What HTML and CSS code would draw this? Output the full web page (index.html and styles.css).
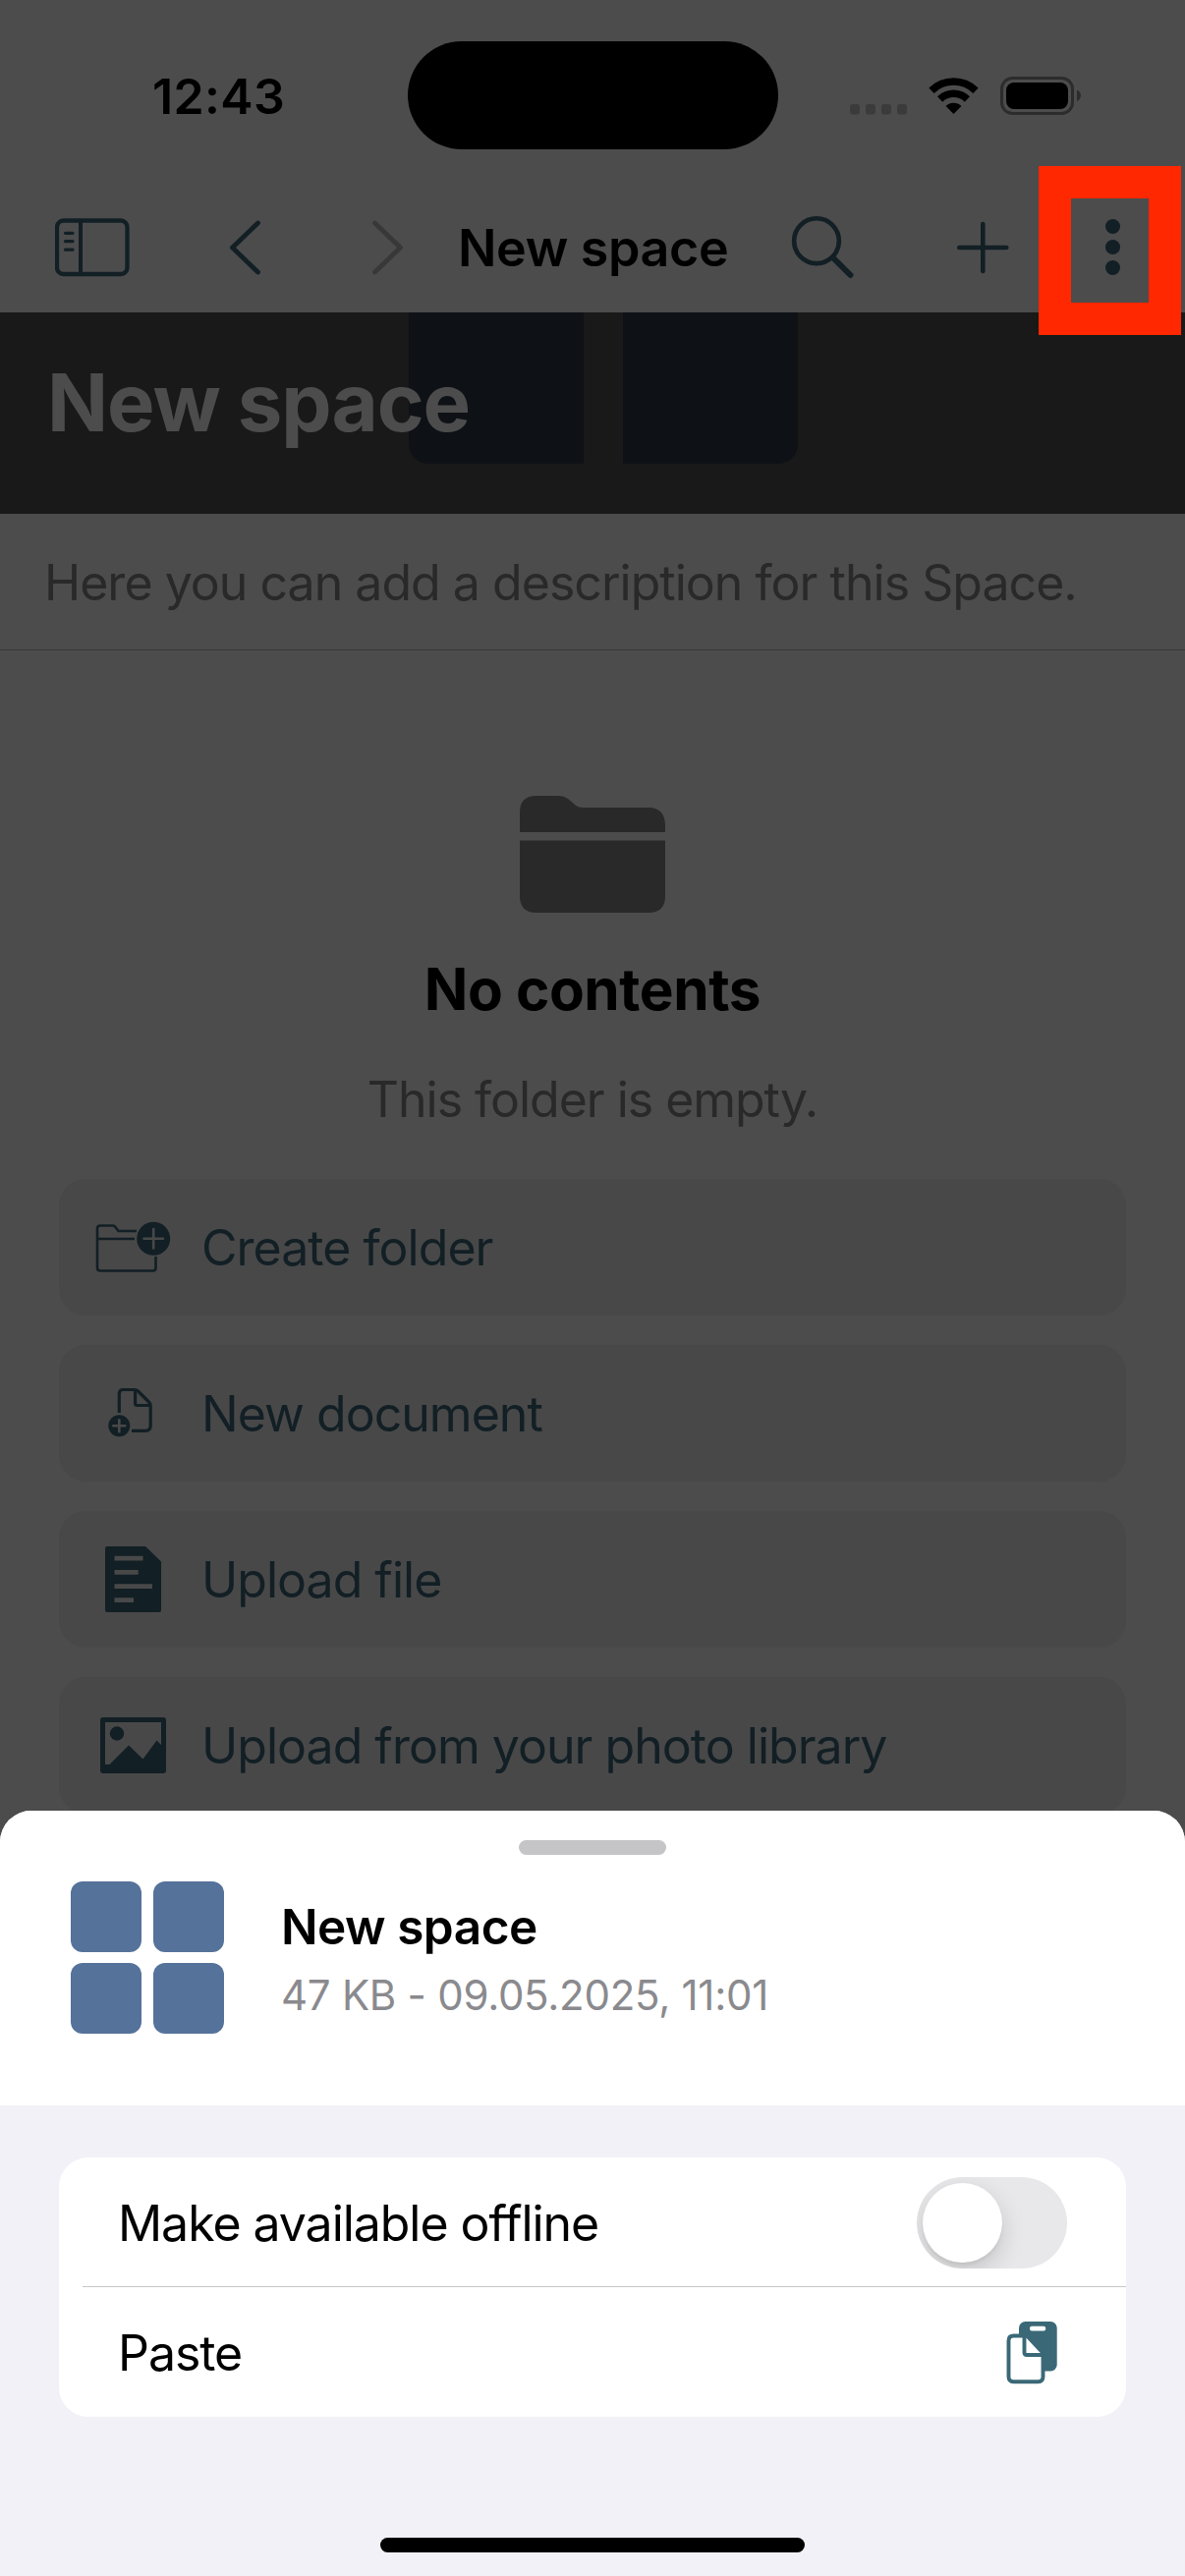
FILE: index.html
```html
<!DOCTYPE html>
<html lang="en">
<head>
<meta charset="utf-8">
<title>New space</title>
<link rel="stylesheet" href="styles.css">
</head>
<body>
<div class="screen">
  <header class="status">
    <span class="time">12:43</span>
    <span class="island"></span>
    <svg class="indicators" viewBox="862 76 240 42" width="240" height="42">
      <g fill="#3b3b3b">
        <rect x="865" y="106" width="10" height="10.5" rx="3"/>
        <rect x="881" y="106" width="10" height="10.5" rx="3"/>
        <rect x="897" y="106" width="10" height="10.5" rx="3"/>
        <rect x="913" y="106" width="10" height="10.5" rx="3"/>
      </g>
      <path d="M948 92.2A32 32 0 0 1 993 92.2M956.6 100.9A20 20 0 0 1 984.4 100.9" fill="none" stroke="#000" stroke-width="7.6"/>
      <path d="M970.5 116L962.6 107.9A11.5 11.5 0 0 1 978.4 107.9Z"/>
      <rect x="1019.5" y="79.500" width="72" height="36" rx="11" fill="none" stroke="#2c2c2c" stroke-width="3"/>
      <rect x="1024" y="84" width="63" height="27" rx="8"/>
      <path d="M1096 91.500Q1100 93.500 1100 97.200T1096 103Z" fill="#2c2c2c"/>
    </svg>
  </header>

  <nav class="nav">
    <svg class="nav-sidebar" viewBox="56 222 76 60" width="76" height="60" fill="none" stroke="#121f25" stroke-linecap="round">
      <rect x="58" y="224.500" width="71.500" height="54.500" rx="6.500" stroke-width="4.300"/>
      <path d="M82 225V279" stroke-width="4"/>
      <path d="M66.500 237.300H74M66.500 245.700H74M66.500 254.200H74" stroke-width="3.200"/>
    </svg>
    <svg class="nav-back" viewBox="233 224 34 56" width="34" height="56" fill="none" stroke="#121f25" stroke-width="4.800" stroke-linecap="round" stroke-linejoin="round"><path d="M262.500 227L236.500 252L262.500 277"/></svg>
    <svg class="nav-forward" viewBox="378 224 34 56" width="34" height="56" fill="none" stroke="#383838" stroke-width="4.800" stroke-linecap="round" stroke-linejoin="round"><path d="M381.500 227L407.500 252L381.500 277"/></svg>
    <span class="nav-title">New space</span>
    <svg class="nav-search" viewBox="805 219 64 66" width="64" height="66" fill="none" stroke="#121f25" stroke-linecap="round"><circle cx="831" cy="245.200" r="22.900" stroke-width="4.600"/><path d="M848.500 263L865.500 280" stroke-width="6"/></svg>
    <svg class="nav-plus" viewBox="973 225 55 54" width="55" height="54" stroke="#121f25" stroke-width="4.600" stroke-linecap="round"><path d="M1000.300 228V276M976.300 252H1024.300"/></svg>
    <svg class="nav-more" viewBox="1124 222 17 60" width="17" height="60" fill="#121f25"><circle cx="1132.500" cy="230.500" r="7.500"/><circle cx="1132.500" cy="251.500" r="7.500"/><circle cx="1132.500" cy="272.500" r="7.500"/></svg>
    <span class="highlight"></span>
  </nav>

  <section class="banner">
    <div class="cover"><i></i><i></i></div>
    <h1>New space</h1>
  </section>
  <p class="description">Here you can add a description for this Space.</p>

  <main class="empty">
    <svg class="folder" viewBox="529 810 149 119" width="149" height="119" fill="#292929">
      <path d="M529 847V827Q529 810 546 810H568C581 810 583 822 593 822H660Q677 822 677 841V847Z"/>
      <path d="M529 855.500H677V912Q677 929 660 929H546Q529 929 529 912Z"/>
    </svg>
    <h2>No contents</h2>
    <p>This folder is empty.</p>
  </main>

  <div class="actions">
    <div class="action">
      <svg viewBox="94 1230 80 80" width="80" height="80" fill="none" stroke="#121f25" stroke-width="2.600" stroke-linecap="butt">
        <path d="M139 1253H120.500L117.500 1249Q116.500 1247.500 115 1247.500H102Q99 1247.500 99 1250.500V1290.500Q99 1293.500 102 1293.500H155.500Q158.500 1293.500 158.500 1290.500V1279M99 1261H137"/>
        <circle cx="156.200" cy="1260.700" r="17" fill="#121f25" stroke="none"/>
        <path d="M146.500 1260.700H166M156.200 1251V1270.500" stroke="#484848" stroke-linecap="round"/>
      </svg>
      <span>Create folder</span>
    </div>
    <div class="action">
      <svg viewBox="94 1399 80 80" width="80" height="80" fill="none" stroke="#121f25" stroke-width="3.200" stroke-linejoin="round">
        <path d="M121.300 1438V1418.500Q121.300 1414.500 125.300 1414.500H137Q139 1414.500 140.500 1416L151.500 1427Q153.200 1428.700 153.200 1431V1451Q153.200 1456.300 148 1456.300H134"/>
        <path d="M137.600 1415V1428.500Q137.600 1430.500 139.600 1430.500H153"/>
        <circle cx="121.300" cy="1451.200" r="11" fill="#121f25" stroke="none"/>
        <path d="M115.300 1451.200H127.300M121.300 1445.200V1457.200" stroke="#484848" stroke-width="2.600" stroke-linecap="round"/>
      </svg>
      <span>New document</span>
    </div>
    <div class="action">
      <svg viewBox="94 1568 80 80" width="80" height="80">
        <path fill="#121f25" d="M109 1574H148L164 1589.500V1639Q164 1641 162 1641H109Q107 1641 107 1639V1576Q107 1574 109 1574Z"/>
        <path stroke="#484848" stroke-width="4.700" d="M116.500 1586.200H145.500M116.500 1600.300H140.700M116.500 1614.600H155M116.500 1628.700H136"/>
      </svg>
      <span>Upload file</span>
    </div>
    <div class="action">
      <svg viewBox="94 1737 80 80" width="80" height="80" fill="#121f25">
        <rect x="104.500" y="1750.500" width="62" height="52" rx="0.500" fill="none" stroke="#121f25" stroke-width="5" stroke-linejoin="round"/>
        <circle cx="119" cy="1764.500" r="7.200"/>
        <path d="M111.500 1796L131 1776.500L145.500 1790.500L159.500 1771.500L166 1778V1803H104V1796Z"/>
      </svg>
      <span>Upload from your photo library</span>
    </div>
  </div>
</div>

<section class="sheet">
  <div class="sheet-head">
    <div class="grabber"></div>
    <div class="summary">
      <div class="tiles"><i></i><i></i><i></i><i></i></div>
      <div class="info">
        <strong>New space</strong>
        <span>47 KB - 09.05.2025, 11:01</span>
      </div>
    </div>
  </div>
  <div class="sheet-body">
    <div class="options">
      <div class="option option-offline"><span>Make available offline</span><span class="toggle"><i></i></span></div>
      <div class="option option-paste">
        <span>Paste</span>
        <svg viewBox="1024 2361 53 65" width="53" height="65">
          <rect x="1037" y="2362" width="38.700" height="50.500" rx="6.500" fill="#3a6877"/>
          <rect x="1048" y="2366.800" width="16.200" height="4.600" rx="2" fill="#fff"/>
          <path d="M1044 2376.500H1031.500Q1026.500 2376.500 1026.500 2381.500V2418Q1026.500 2423.200 1031.500 2423.200H1056.500Q1061.500 2423.200 1061.500 2418V2396Q1061.500 2394 1060 2392.300L1046.500 2378Q1045.300 2376.500 1043 2376.500Z" fill="#fff" stroke="#3a6877" stroke-width="3.900"/>
          <path d="M1042.500 2377V2393.500Q1042.500 2396 1045 2396H1061" fill="none" stroke="#3a6877" stroke-width="3.900"/>
        </svg>
      </div>
    </div>
    <div class="home"></div>
  </div>
</section>
</body>
</html>
```
FILE: styles.css
```css
* {
  box-sizing: border-box;
}

body {
  margin: 0;
  position: relative;
  width: 1206px;
  height: 2622px;
  overflow: hidden;
  background: #4c4c4c;
  color: #000;
  font-family: Inter, "Liberation Sans", sans-serif;
  font-size: 50px;
}

h1, h2, p {
  margin: 0;
}

svg {
  display: block;
  flex: none;
}

.screen {
  display: flex;
  flex-direction: column;
  height: 1900px;
  overflow: hidden;
}

/* Status bar */
.status {
  flex: none;
  display: grid;
  grid-template-columns: 415px 377px 1fr;
  align-items: center;
  height: 194px;
}

.time {
  padding: 2px 0 0 155px;
  font-weight: 600;
  letter-spacing: 0.37px;
  line-height: 60px;
}

.island {
  height: 110px;
  border-radius: 55px;
  background: #000;
}

.indicators {
  margin-left: 70px;
}

/* Navigation bar */
.nav {
  position: relative;
  flex: none;
  display: flex;
  align-items: center;
  height: 124px;
  padding: 0 0 8px 56px;
}

.nav-back {
  margin-left: 101px;
}

.nav-forward {
  margin-left: 111px;
}

.nav-title {
  width: 279px;
  margin-left: 54px;
  padding-top: 2px;
  font-size: 52px;
  font-weight: 600;
  letter-spacing: -0.36px;
  line-height: 64px;
  white-space: nowrap;
}

.nav-search {
  margin-left: 60px;
}

.nav-plus {
  margin-left: 104px;
}

.nav-more {
  margin-left: 96px;
}

.highlight {
  position: absolute;
  top: -25px;
  left: 1057px;
  width: 145px;
  height: 172px;
  border: solid #ff2800;
  border-width: 33px;
  z-index: 2;
}

/* Space banner */
.banner {
  position: relative;
  flex: none;
  display: flex;
  align-items: center;
  height: 204.500px;
  padding: 0 0 21px 48px;
  background: #191919;
}

.banner h1 {
  position: relative;
  color: #4c4c4c;
  font-size: 81.500px;
  font-weight: 700;
  letter-spacing: -1.090px;
  line-height: 100px;
}

.cover {
  position: absolute;
  top: 0;
  left: 416px;
  display: flex;
  gap: 40px;
}

.cover i {
  width: 178px;
  height: 154px;
  background: #0e1116;
  border-radius: 0 0 0 20px;
}

.cover i + i {
  border-radius: 0 0 20px 0;
}

.description {
  flex: none;
  height: 139.500px;
  padding: 40px 0 0 45px;
  border-bottom: 1px solid #393939;
  color: #292929;
  letter-spacing: -0.970px;
  line-height: 60px;
  white-space: nowrap;
}

/* Empty state */
.empty {
  display: flex;
  flex-direction: column;
  align-items: center;
  padding-top: 148px;
}

.empty h2 {
  margin-top: 43px;
  font-size: 58.500px;
  font-weight: 700;
  letter-spacing: -0.420px;
  line-height: 70px;
}

.empty p {
  margin-top: 47px;
  color: #292929;
  letter-spacing: -1.030px;
  line-height: 60px;
}

/* Action list */
.actions {
  display: flex;
  flex-direction: column;
  gap: 30px;
  padding: 51px 60px 0;
}

.action {
  flex: none;
  display: flex;
  align-items: center;
  gap: 31px;
  height: 139px;
  padding-left: 34px;
  border-radius: 27px;
  background: #484848;
  color: #121f25;
  letter-spacing: -0.970px;
  line-height: 60px;
  white-space: nowrap;
}

/* Bottom sheet */
.sheet {
  position: absolute;
  left: 0;
  bottom: 0;
  width: 1206px;
  height: 779px;
  overflow: hidden;
  border-radius: 32px 32px 0 0;
  background: #f2f1f7;
}

.sheet-head {
  display: flex;
  flex-direction: column;
  height: 300px;
  padding-top: 30px;
  background: #fff;
}

.grabber {
  align-self: center;
  width: 150px;
  height: 15px;
  border-radius: 8px;
  background: #c5c5c7;
}

.summary {
  display: flex;
  align-items: center;
  gap: 58px;
  margin-top: 27px;
  padding-left: 72px;
}

.tiles {
  display: grid;
  grid-template-columns: 72px 72px;
  grid-auto-rows: 72px;
  gap: 11px 12px;
}

.tiles i {
  border-radius: 12px;
  background: #55729a;
}

.info {
  display: flex;
  flex-direction: column;
  padding-top: 7px;
  line-height: 70px;
}

.info strong {
  font-size: 49.500px;
  font-weight: 600;
  letter-spacing: -0.490px;
}

.info span {
  color: #8a8a8e;
  font-size: 42px;
  letter-spacing: -0.270px;
}

.sheet-body {
  padding: 53px 60px 0;
}

.options {
  border-radius: 30px;
  background: #fff;
}

.option {
  display: flex;
  align-items: center;
  justify-content: space-between;
  height: 132px;
  letter-spacing: -1.050px;
  line-height: 60px;
}

.option-offline {
  margin-left: 24px;
  padding: 2px 60px 0 36px;
  border-bottom: 1px solid #c6c6c8;
}

.option-paste {
  padding: 2px 69px 0 60px;
}

.option-paste svg {
  margin-bottom: 2px;
}

.toggle {
  display: flex;
  align-items: center;
  width: 153px;
  height: 93px;
  padding: 6px;
  overflow: hidden;
  border-radius: 47px;
  background: #e8e8ea;
}

.toggle i {
  width: 81px;
  height: 81px;
  border-radius: 50%;
  background: #fff;
  box-shadow: 0 9px 24px rgba(0, 0, 0, 0.16), 0 3px 3px rgba(0, 0, 0, 0.05);
}

.home {
  width: 432px;
  height: 15px;
  margin: 123px auto 0;
  border-radius: 8px;
  background: #000;
}
```
